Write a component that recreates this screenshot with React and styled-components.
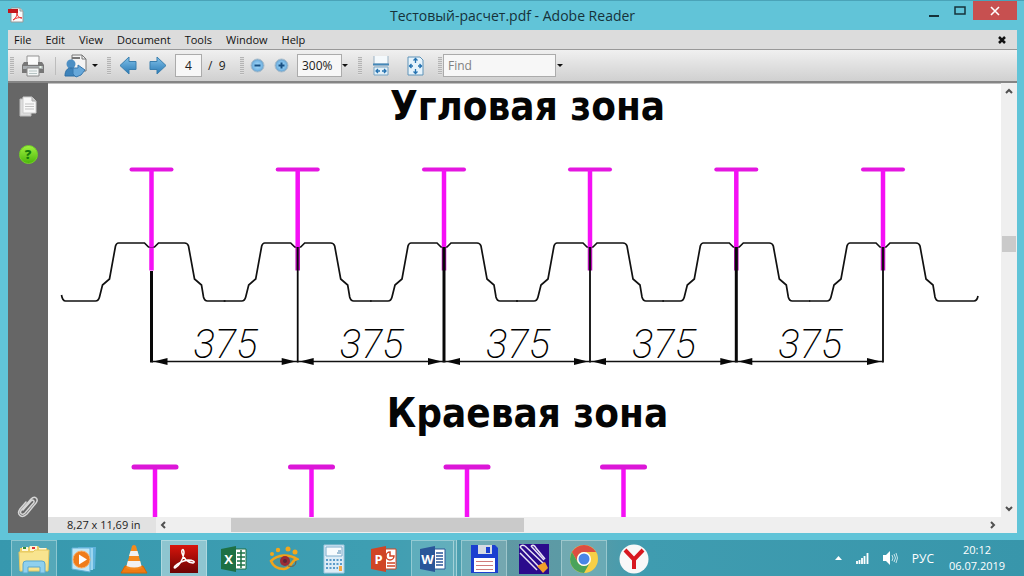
import React from 'react';
import styled, { createGlobalStyle } from 'styled-components';

const GlobalStyle = createGlobalStyle`
  * {
    box-sizing: border-box;
  }
  body {
    margin: 0;
    font-family: 'Open Sans', 'Noto Sans', sans-serif;
    font-size: 12px;
    color: #222;
  }
  button, input {
    font: inherit;
    color: inherit;
  }
  button {
    padding: 0;
    border: 0;
    background: none;
  }
  svg {
    display: block;
    flex: none;
  }
`;

const Desktop = styled.div`
  display: flex;
  flex-direction: column;
  height: 100vh;
  overflow: hidden;
`;

const Window = styled.main`
  flex: 1;
  min-height: 0;
  display: flex;
  flex-direction: column;
  padding: 0 7px 7px 8px;
  background: #61c4d8;
  border-top: 1px solid #4aa3b8;
`;

const TitleBar = styled.header`
  display: grid;
  grid-template-columns: 112px 1fr 112px;
  height: 29px;
  flex: none;
`;

const AppIcon = styled.div`
  padding-top: 6px;
`;

const Title = styled.h1`
  margin: 0;
  font-size: 14px;
  line-height: 30px;
  font-weight: 400;
  text-align: center;
  color: #16323a;
`;

const WindowButtons = styled.div`
  display: flex;
  justify-content: flex-end;
  align-items: flex-start;
`;

const WindowButton = styled.button`
  display: grid;
  place-items: center;
  width: ${(p) => (p.$close ? 44 : 26)}px;
  height: 19px;
  background: ${(p) => (p.$close ? '#c75050' : 'transparent')};
`;

const MenuBar = styled.nav`
  display: flex;
  align-items: center;
  gap: 14px;
  height: 20px;
  flex: none;
  padding: 0 11px 0 6px;
  background: #dcdcdc;
  border-bottom: 1px solid #989898;
`;

const MenuItem = styled.button`
  font-size: 11px;
  line-height: 18px;
  color: #111;
  &:last-child {
    margin-left: auto;
  }
`;

const Toolbar = styled.div`
  display: flex;
  align-items: center;
  height: 31px;
  flex: none;
  padding-left: 2px;
  background: linear-gradient(#f0f0f0, #d0d0d0);
`;

const Group = styled.div`
  display: flex;
  align-items: center;
  gap: ${(p) => p.$gap || 0}px;
  padding-left: ${(p) => p.$pad ?? 8}px;
  width: ${(p) => p.$width}px;
`;

const Grip = styled.span`
  width: 4px;
  height: 18px;
  flex: none;
  background: repeating-linear-gradient(#b4b4b4 0 1px, #dedede 1px 2px);
`;

const Divider = styled.span`
  width: 1px;
  height: 18px;
  flex: none;
  background: #bdbdbd;
`;

const Field = styled.input`
  width: ${(p) => p.$width}px;
  height: 23px;
  padding: 0 4px;
  border: 1px solid #ababab;
  border-radius: 0;
  background: #f7f7f7;
  text-align: ${(p) => p.$align || 'left'};
  &::placeholder {
    color: #808080;
    opacity: 1;
  }
`;

const Caret = styled.button`
  width: 6px;
  height: 20px;
  flex: none;
  display: grid;
  place-items: center;
  &::after {
    content: '';
    border: 3px solid transparent;
    border-top-color: #111;
    border-bottom: 0;
  }
`;

const Workspace = styled.div`
  display: flex;
  flex: 1;
  min-height: 0;
  border-top: 2px solid #858585;
`;

const Sidebar = styled.aside`
  display: flex;
  flex-direction: column;
  align-items: center;
  width: 40px;
  flex: none;
  gap: 28px;
  padding: 13px 0 14px;
  background: #666;
  & > :last-child {
    margin-top: auto;
  }
`;

const Viewer = styled.section`
  flex: 1;
  min-width: 0;
  display: grid;
  grid-template-columns: 1fr 16px;
  grid-template-rows: 1fr 16px;
`;

const Page = styled.article`
  min-height: 0;
  overflow: hidden;
  background: #fff;
  border-top: 1px solid #c0c0c0;
`;

const Heading = styled.h2`
  margin: 0;
  padding: 0 0 12px 6px;
  font-family: 'DejaVu Sans Condensed', 'DejaVu Sans', sans-serif;
  font-size: 40px;
  line-height: 44px;
  font-weight: 700;
  text-align: center;
  color: #050505;
`;

const Drawing = styled.svg`
  width: 100%;
  height: auto;
`;

const DimensionText = styled.text`
  font-family: Roboto, sans-serif;
  font-size: 40px;
  font-style: italic;
  font-weight: 200;
`;

const VScroll = styled.div`
  display: flex;
  flex-direction: column;
  align-items: center;
  justify-content: space-between;
  padding: 4px 0;
  background: #efefef;
`;

const VThumb = styled.span`
  width: 14px;
  height: 16px;
  margin-bottom: 112px;
  background: #cacaca;
`;

const StatusBar = styled.footer`
  grid-column: 1 / -1;
  display: flex;
  align-items: center;
  background: #efefef;
`;

const PageSize = styled.span`
  width: 108px;
  padding-left: 19px;
  flex: none;
  font-size: 11px;
  line-height: 16px;
  background: #e2e2e2;
`;

const HTrack = styled.div`
  flex: 1;
  display: flex;
  align-items: center;
  height: 16px;
  padding: 0 20px 0 3px;
`;

const HThumb = styled.span`
  width: 35%;
  height: 14px;
  margin: 0 auto 0 64px;
  background: #cacaca;
`;

const Taskbar = styled.footer`
  display: flex;
  align-items: stretch;
  height: 36px;
  flex: none;
  padding: 0 18px 0 11px;
  background: linear-gradient(90deg, #3798ae 0, #3e9eb2 36%, #48a0b2 44%, #5f98a3 49%, #5b9ba6 57%, #3f9cb0 63%, #3896ab 100%);
`;

const Apps = styled.div`
  display: flex;
  gap: 4px;
`;

const stateColors = {
  open: 'rgba(190, 225, 225, 0.22)',
  stacked: 'rgba(190, 225, 225, 0.22)',
  active: 'rgba(225, 240, 240, 0.5)',
};

const AppButton = styled.button`
  display: grid;
  place-items: center;
  width: 46px;
  background: ${(p) => stateColors[p.$state] || 'transparent'};
  border: 1px solid ${(p) => (p.$state ? 'rgba(225, 245, 245, 0.4)' : 'transparent')};
  border-bottom: 0;
  ${(p) => p.$state === 'stacked' && 'border-right: 4px double rgba(225, 245, 245, 0.5);'}
`;

const Tray = styled.div`
  display: flex;
  align-items: center;
  gap: 14px;
  margin-left: auto;
  color: #fff;
`;

const Clock = styled.time`
  width: 58px;
  font-size: 11px;
  line-height: 16px;
  text-align: center;
  white-space: nowrap;
`;

const menus = ['File', 'Edit', 'View', 'Document', 'Tools', 'Window', 'Help'];

const PdfIcon = () => (
  <svg width="16" height="16" viewBox="0 0 16 16">
    <path d="M3 1h9l3 3v11H3z" fill="#fafafa" stroke="#999" />
    <path d="M12 1v3h3" fill="#ddd" stroke="#999" />
    <path d="M0 2h10v4H0z" fill="#c4161c" />
    <path d="M5 13c3-2 4-4 4-7 0 3 2 5 5 5-3-1-6 0-9 2" fill="none" stroke="#e33" />
  </svg>
);

const PrinterIcon = () => (
  <svg width="22" height="22" viewBox="0 0 22 22">
    <path d="M5 9V1h12v8" fill="#fafafa" stroke="#929292" />
    <path d="M2 7h4v3h10V7h4l2 3v8H0v-8z" fill="#777" />
    <path d="M1 11h20v3H1z" fill="#a9adb0" />
    <path d="M5 13h12v8H5z" fill="#f2f5f5" stroke="#8a8a8a" />
    <path d="M7 16h8M7 18.500h8" stroke="#b7c4c4" />
    <path d="M17.500 12h2" stroke="#e7f5e7" strokeWidth="2" />
  </svg>
);

const ShareIcon = () => (
  <svg width="24" height="24" viewBox="0 0 24 24">
    <path d="M8 6V1h10l4 4v12H10z" fill="#f4f4f4" stroke="#777" />
    <path d="M18 1v4h4" fill="none" stroke="#777" />
    <path d="M8 4h8" stroke="#777" strokeWidth="2" />
    <circle cx="7" cy="10" r="4.500" fill="#4c8fc4" />
    <path d="M1 22c0-5 2-8 6-8s6 3 6 8z" fill="#3d83bb" stroke="#2b6ca3" />
    <path d="M9 20v-6h5v-3l7 5-4 5-5 2z" fill="#67a8da" stroke="#3878ae" />
  </svg>
);

const ArrowIcon = ({ flip }) => (
  <svg width="18" height="19" viewBox="0 0 18 19">
    <defs>
      <linearGradient id="arrow" x2="0" y2="1">
        <stop stopColor="#82c3ea" />
        <stop offset="1" stopColor="#2878b4" />
      </linearGradient>
    </defs>
    <path
      d="M1 9.500 10 1v4.500h7v8h-7V18z"
      fill="url(#arrow)"
      stroke="#3b7fae"
      strokeLinejoin="round"
      transform={flip ? 'matrix(-1 0 0 1 18 0)' : undefined}
    />
  </svg>
);

const ZoomIcon = ({ plus }) => (
  <svg width="15" height="15" viewBox="0 0 15 15">
    <defs>
      <radialGradient id="lens">
        <stop stopColor="#a8dcfb" />
        <stop offset="0.7" stopColor="#78b8e6" />
        <stop offset="1" stopColor="#6b9dc3" />
      </radialGradient>
    </defs>
    <circle cx="7.500" cy="7.500" r="6.500" fill="url(#lens)" stroke="#a9bdcc" />
    <path d={plus ? 'M4.500 7.500h6M7.500 4.500v6' : 'M4.500 7.500h6'} stroke="#174f82" strokeWidth="2" />
  </svg>
);

const FitWidthIcon = () => (
  <svg width="16" height="20" viewBox="0 0 16 20">
    <path d="M1 0v8h14V0" fill="#f4f9fc" stroke="#9bb2c3" />
    <path d="M0 8.500h16" stroke="#4387b8" strokeWidth="2" />
    <path d="M1 11h14v8H1z" fill="#e2f0f8" stroke="#7ba5c3" />
    <path d="M3 15h4M9 15h4M5 13l-2 2 2 2M11 13l2 2-2 2" fill="none" stroke="#2673b1" strokeWidth="1.300" />
  </svg>
);

const FitPageIcon = () => (
  <svg width="17" height="20" viewBox="0 0 17 20">
    <path d="M1 1h12l3 3v15H1z" fill="#e6f3fb" stroke="#5f93b8" />
    <path d="M8.500 2v5M8.500 13v5M2 10h4M11 10h4M6.500 4.500l2-2 2 2M6.500 15.500l2 2 2-2M4.500 8l-2 2 2 2M12.500 8l2 2-2 2" fill="none" stroke="#2673b1" strokeWidth="1.300" />
  </svg>
);

const PagesIcon = () => (
  <svg width="18" height="21" viewBox="0 0 18 21">
    <path d="M1 3h11v17H1z" fill="#ddd" stroke="#bbb" />
    <path d="M4 1h9l4 4v12H4z" fill="#f8f8f8" stroke="#ccc" />
    <path d="M13 1v4h4" fill="#ccc" stroke="#aaa" />
    <path d="M6 8h9M6 10.500h9M6 13h9" stroke="#c3c3c3" />
  </svg>
);

const HelpBadge = styled.button`
  width: 19px;
  height: 19px;
  border-radius: 50%;
  background: linear-gradient(#9df03e, #4db80c);
  border: 1px solid #73d624;
  color: #167a0c;
  font-weight: 800;
  font-size: 13px;
  line-height: 17px;
`;

const ClipIcon = () => (
  <svg width="22" height="24" viewBox="0 0 22 24">
    <path
      d="M6 15 14 6c2-2 4 0 2.500 2L8 18c-3 3-6 0-3.500-3L14 4c4-4 8 0 5 4l-9 11c-5 5-11 1-7-5l6-7"
      fill="none"
      stroke="#d6d6d6"
      strokeWidth="1.500"
      strokeLinecap="round"
    />
  </svg>
);

const chevrons = {
  up: 'M1 6l3-3 3 3',
  down: 'M1 2l3 3 3-3',
  left: 'M6 1 3 4l3 3',
  right: 'M2 1l3 3-3 3',
};

const Chevron = ({ dir }) => (
  <svg width="8" height="8" viewBox="0 0 8 8">
    <path d={chevrons[dir]} fill="none" stroke="#505050" strokeWidth="2" />
  </svg>
);

// one corrugation of the sheet, centred on the fastener
const ribPath = (x, first, last) => `
  ${first ? `M${x - 90} 155q1 6 4 6` : `M${x - 74} 161`}
  H${x - 56} q3 0 4-4 l3-12 7-6 6-33 q1-3 3-3 H${x - 7} l4 4 h6 l4-4 H${x + 33}
  q3 0 4 3 l6 33 7 6 2 12 q1 4 4 4 H${x + (last ? 91 : 74)} ${last ? 'q3 0 4-5' : ''}`;

const posts = [103.5, 249.7, 396, 542, 688.3, 835];

const CornerZone = () => (
  <Drawing viewBox="0 0 953 251" role="img" aria-label="Угловая зона">
    {posts.map((x, i) => (
      <g key={x} fill="none">
        <path d={`M${x - 20} 29.500h40`} stroke="#e416e0" strokeWidth="4" strokeLinecap="round" />
        <path d={`M${x} 106v24.500`} stroke={i ? '#b60cb4' : '#f510f5'} strokeWidth="4.500" />
        <path d={ribPath(x, i === 0, i === 5)} stroke="#111" strokeWidth="1.700" />
        <path d={`M${x} 30v77.500`} stroke="#f510f5" strokeWidth="4.500" />
        <path d={`M${x} ${i ? 107 : 131}V222.500`} stroke="#080808" strokeWidth={i % 2 ? 1.8 : 3} />
      </g>
    ))}
    {posts.slice(0, -1).map((x, i) => (
      <g key={x}>
        <path d={`M${x} 221.500H${posts[i + 1]}`} stroke="#111" strokeWidth="1.500" />
        <path d={`M${x + 2} 221.500l14-3.500v7zM${posts[i + 1] - 2} 221.500l-14-3.500v7z`} fill="#080808" />
        <DimensionText x={x + 74} y="218" textAnchor="middle">375</DimensionText>
      </g>
    ))}
  </Drawing>
);

const EdgeZone = () => (
  <Drawing viewBox="0 0 953 79" role="img" aria-label="Краевая зона">
    {[107, 263.5, 419, 575.5].map((x) => (
      <g key={x}>
        <path d={`M${x} 20v59`} stroke="#f510f5" strokeWidth="4.500" />
        <path d={`M${x - 21} 20h42`} stroke="#dc16d8" strokeWidth="5" strokeLinecap="round" />
      </g>
    ))}
  </Drawing>
);

const ExplorerIcon = () => (
  <svg width="32" height="30" viewBox="0 0 32 30">
    <path d="M2 4h8l2-2h8l2 2h7v22H2z" fill="#efcf66" />
    <path d="M4 3h6v4H4zM12 2h7v5h-7zM21 4h7v4h-7z" fill="#fff7d7" />
    <path d="M5 4h3" stroke="#388e3c" strokeWidth="2" />
    <path d="M14 4h3" stroke="#d33" strokeWidth="2" />
    <path d="M1 8h14l2-2h14l-1 21H2z" fill="#f8e48f" stroke="#e5c861" />
    <path d="M5 29V20q0-3 3-3h16q3 0 3 3v9h-5v-6H10v6z" fill="#8fd0ee" stroke="#5aa7cf" />
  </svg>
);

const PlayerIcon = () => (
  <svg width="28" height="28" viewBox="0 0 28 28">
    <path d="M8 2h18l-1 22H10z" fill="#5fb3dc" />
    <path d="M5 3h18v22H5z" fill="#9ad5f0" />
    <path d="M2 3h18v24L2 24z" fill="#bfe6f7" stroke="#61b0d6" />
    <circle cx="11.500" cy="14.500" r="8.500" fill="#ef7c1a" stroke="#f7b06b" />
    <path d="M9 9.500v10l8-5z" fill="#fff" />
  </svg>
);

const ConeIcon = () => (
  <svg width="28" height="30" viewBox="0 0 28 30">
    <path d="M5 22h18l4 7H1z" fill="#ef7b12" stroke="#d36507" />
    <path d="M12 2q2-2 4 0l6 22q-8 4-16 0z" fill="#f58a1d" />
    <path d="M10.500 7h7l1.500 5H9zM7.800 17h12.400l1.300 5q-7 3-15 0z" fill="#f1f1f1" />
  </svg>
);

const AcrobatIcon = () => (
  <svg width="30" height="28" viewBox="0 0 30 28">
    <defs>
      <linearGradient id="acro" x2="0" y2="1">
        <stop stopColor="#d8150c" />
        <stop offset="1" stopColor="#6c0303" />
      </linearGradient>
    </defs>
    <path d="M1 0h28v28H1z" fill="url(#acro)" />
    <path d="M6 23c4-2 8-8 9-15 0-5-3-4-2 0 1 5 6 10 11 10 3-1 0-3-5-3-5 1-10 3-13 6-1 1-1 2 0 2" fill="none" stroke="#fff" strokeWidth="1.500" />
  </svg>
);

const OfficeLetter = styled.text`
  font-family: 'Open Sans', sans-serif;
  font-size: 13px;
  font-weight: 700;
  fill: #fff;
`;

const OfficeIcon = ({ color, letter, children }) => (
  <svg width="28" height="28" viewBox="0 0 28 28">
    <path d="M14 4h12v20H14z" fill="#fff" stroke={color} />
    <g fill="none" stroke={color} strokeWidth="1.500">{children}</g>
    <path d="M1 4 16 1v26L1 24z" fill={color} />
    <OfficeLetter x="8.500" y="19" textAnchor="middle">{letter}</OfficeLetter>
  </svg>
);

const EyeIcon = () => (
  <svg width="30" height="26" viewBox="0 0 30 26">
    <g fill="#f3a71b">
      <circle cx="3" cy="8" r="2" />
      <circle cx="9" cy="4" r="2.200" />
      <circle cx="19" cy="3" r="2.500" />
      <circle cx="26" cy="6" r="2.500" />
    </g>
    <path d="M2 15c7-7 18-7 26-2-6 1-5 9-13 10C8 23 4 20 2 15z" fill="#48939a" stroke="#f0a31b" strokeWidth="2.500" />
    <circle cx="16" cy="15" r="5" fill="#9b2b35" />
    <circle cx="16" cy="15" r="2" fill="#592838" />
    <path d="M19 20q8 2 8-5" fill="none" stroke="#725b44" />
  </svg>
);

const CalculatorIcon = () => (
  <svg width="24" height="30" viewBox="0 0 24 30">
    <path d="M2 1h20v28H2z" fill="#dcecf6" stroke="#a3c8df" />
    <path d="M4 3h16v9H4z" fill="#f7fbfd" stroke="#7cadcd" />
    <path d="M15 9h4M16 7h3" stroke="#4b86b0" />
    <path d="M4 16h16M4 20h16M4 24h12" stroke="#5b9bc9" strokeWidth="2" strokeDasharray="2 1.500" />
    <path d="M17 22h3v5h-3z" fill="#f4a843" />
  </svg>
);

const FloppyIcon = () => (
  <svg width="28" height="28" viewBox="0 0 28 28">
    <path d="M1 0h24l3 3v25H1z" fill="#1b3fd0" />
    <path d="M8 0h14v9H8z" fill="#d5dbe3" />
    <path d="M16 2h4v6h-4z" fill="#1b3fd0" />
    <path d="M4 13h21v14H4z" fill="#fff" />
    <path d="M6 16.500h17M6 20.500h17M6 24.500h17" stroke="#ce7b7b" />
  </svg>
);

const HatchIcon = () => (
  <svg width="32" height="30" viewBox="0 0 32 30">
    <path d="M1 0h30v30H1z" fill="#2b0b8c" />
    <path d="M2 3l20 21M2 9l17 17M7 2l19 18M13 2l13 14" stroke="#e8e2f4" strokeWidth="1.500" />
    <path d="M2 3q2-3 5-1M13 2q3-2 5 2l9 11" fill="none" stroke="#e8e2f4" strokeWidth="1.500" />
    <path d="M19 22l8-4 3 6-5 5z" fill="#f0a02a" />
  </svg>
);

const ChromeIcon = () => (
  <svg width="30" height="30" viewBox="0 0 30 30">
    <circle cx="15" cy="15" r="14" fill="#f7cf46" />
    <path d="M2.900 8A14 14 0 0 1 27.100 8H15a7 7 0 0 0-6 10.500z" fill="#dc4e41" />
    <path d="M2.900 8A14 14 0 0 0 15 29l6-10.500a7 7 0 0 1-12 0z" fill="#4aa35b" />
    <circle cx="15" cy="15" r="7" fill="#fff" />
    <circle cx="15" cy="15" r="5.500" fill="#4a86e8" />
  </svg>
);

const YandexIcon = () => (
  <svg width="30" height="30" viewBox="0 0 30 30">
    <circle cx="15" cy="15" r="14.500" fill="#f8f8f8" />
    <path d="M6 6l9 9.500L24 6M15 15v10" fill="none" stroke="#d8171f" strokeWidth="4" />
  </svg>
);

const apps = [
  { name: 'Explorer', state: 'open', icon: <ExplorerIcon /> },
  { name: 'Media Player', icon: <PlayerIcon /> },
  { name: 'VLC', icon: <ConeIcon /> },
  { name: 'Adobe Reader', state: 'active', icon: <AcrobatIcon /> },
  {
    name: 'Excel',
    icon: (
      <OfficeIcon color="#1d7044" letter="X">
        <path d="M17 8h8M17 12h8M17 16h8M17 20h8M21 5v18" />
      </OfficeIcon>
    ),
  },
  { name: 'XnView', icon: <EyeIcon /> },
  { name: 'Calculator', icon: <CalculatorIcon /> },
  {
    name: 'PowerPoint',
    icon: (
      <OfficeIcon color="#d04525" letter="P">
        <path d="M20 7a4 4 0 1 0 4 4h-4zM17 18h8M17 21h8" />
      </OfficeIcon>
    ),
  },
  {
    name: 'Word',
    state: 'stacked',
    icon: (
      <OfficeIcon color="#2a5699" letter="W">
        <path d="M17 8h7M17 11h7M17 14h7M17 17h7M17 20h7" />
      </OfficeIcon>
    ),
  },
  { name: 'Total Commander', state: 'open', icon: <FloppyIcon /> },
  { name: 'CAD', icon: <HatchIcon /> },
  { name: 'Chrome', state: 'open', icon: <ChromeIcon /> },
  { name: 'Yandex', icon: <YandexIcon /> },
];

const SignalIcon = () => (
  <svg width="13" height="12" viewBox="0 0 13 12">
    <path d="M1 9v3M3.500 8v4M6 6v6M8.500 4v8M11.500 1v11" stroke="#fff" strokeWidth="1.800" />
  </svg>
);

const SpeakerIcon = () => (
  <svg width="15" height="14" viewBox="0 0 15 14">
    <path d="M0 4h3l4-4v14l-4-4H0z" fill="#fff" />
    <path d="M9 4q2 3 0 6M11 3q3 4 0 8M13 2q3 5 0 10" fill="none" stroke="#d5edf2" strokeWidth="0.900" />
  </svg>
);

function App() {
  return (
    <Desktop>
      <GlobalStyle />
      <Window>
        <TitleBar>
          <AppIcon><PdfIcon /></AppIcon>
          <Title>Тестовый-расчет.pdf - Adobe Reader</Title>
          <WindowButtons>
            <WindowButton aria-label="Minimize">
              <svg width="12" height="12"><path d="M1 11h10" stroke="#16323a" strokeWidth="2" /></svg>
            </WindowButton>
            <WindowButton aria-label="Maximize">
              <svg width="12" height="10"><path d="M1 1h10v7H1z" fill="none" stroke="#16323a" strokeWidth="1.500" /></svg>
            </WindowButton>
            <WindowButton $close aria-label="Close">
              <svg width="10" height="10"><path d="M1 1l8 8M9 1 1 9" stroke="#fff" strokeWidth="1.600" /></svg>
            </WindowButton>
          </WindowButtons>
        </TitleBar>
        <MenuBar>
          {menus.map((m) => <MenuItem key={m}>{m}</MenuItem>)}
          <MenuItem aria-label="Close document">
            <svg width="8" height="8"><path d="M1 1l6 6M7 1 1 7" stroke="#111" strokeWidth="2.500" /></svg>
          </MenuItem>
        </MenuBar>
        <Toolbar>
          <Grip />
          <Group $width={41}>
            <button aria-label="Print"><PrinterIcon /></button>
          </Group>
          <Divider />
          <Group $width={51} $gap={4}>
            <button aria-label="Share"><ShareIcon /></button>
            <Caret aria-label="Share options" />
          </Group>
          <Grip />
          <Group $width={64} $gap={12}>
            <button aria-label="Previous page"><ArrowIcon /></button>
            <button aria-label="Next page"><ArrowIcon flip /></button>
          </Group>
          <Group $width={65} $gap={6} $pad={0}>
            <Field $width={27} $align="center" defaultValue="4" aria-label="Page" />
            <span>/&nbsp; 9</span>
          </Group>
          <Grip />
          <Group $width={53} $gap={9} $pad={6}>
            <button aria-label="Zoom out"><ZoomIcon /></button>
            <button aria-label="Zoom in"><ZoomIcon plus /></button>
          </Group>
          <Group $width={61} $pad={0}>
            <Field $width={45} defaultValue="300%" aria-label="Zoom" />
            <Caret aria-label="Zoom levels" />
          </Group>
          <Grip />
          <Group $width={76} $gap={18} $pad={11}>
            <button aria-label="Fit width"><FitWidthIcon /></button>
            <button aria-label="Fit page"><FitPageIcon /></button>
          </Group>
          <Grip />
          <Group $gap={1} $pad={1}>
            <Field $width={113} placeholder="Find" aria-label="Find" />
            <Caret aria-label="Find options" />
          </Group>
        </Toolbar>
        <Workspace>
          <Sidebar>
            <button aria-label="Pages"><PagesIcon /></button>
            <HelpBadge>?</HelpBadge>
            <button aria-label="Attachments"><ClipIcon /></button>
          </Sidebar>
          <Viewer>
            <Page>
              <Heading>Угловая зона</Heading>
              <CornerZone />
              <Heading>Краевая зона</Heading>
              <EdgeZone />
            </Page>
            <VScroll>
              <Chevron dir="up" />
              <VThumb />
              <Chevron dir="down" />
            </VScroll>
            <StatusBar>
              <PageSize>8,27 x 11,69 in</PageSize>
              <HTrack>
                <Chevron dir="left" />
                <HThumb />
                <Chevron dir="right" />
              </HTrack>
            </StatusBar>
          </Viewer>
        </Workspace>
      </Window>
      <Taskbar>
        <Apps>
          {apps.map((a) => (
            <AppButton key={a.name} $state={a.state} aria-label={a.name}>{a.icon}</AppButton>
          ))}
        </Apps>
        <Tray>
          <svg width="7" height="4"><path d="M0 4l3.500-4L7 4z" fill="#fff" /></svg>
          <SignalIcon />
          <SpeakerIcon />
          <span>РУС</span>
          <Clock>20:12<br />06.07.2019</Clock>
        </Tray>
      </Taskbar>
    </Desktop>
  );
}

export default App;
